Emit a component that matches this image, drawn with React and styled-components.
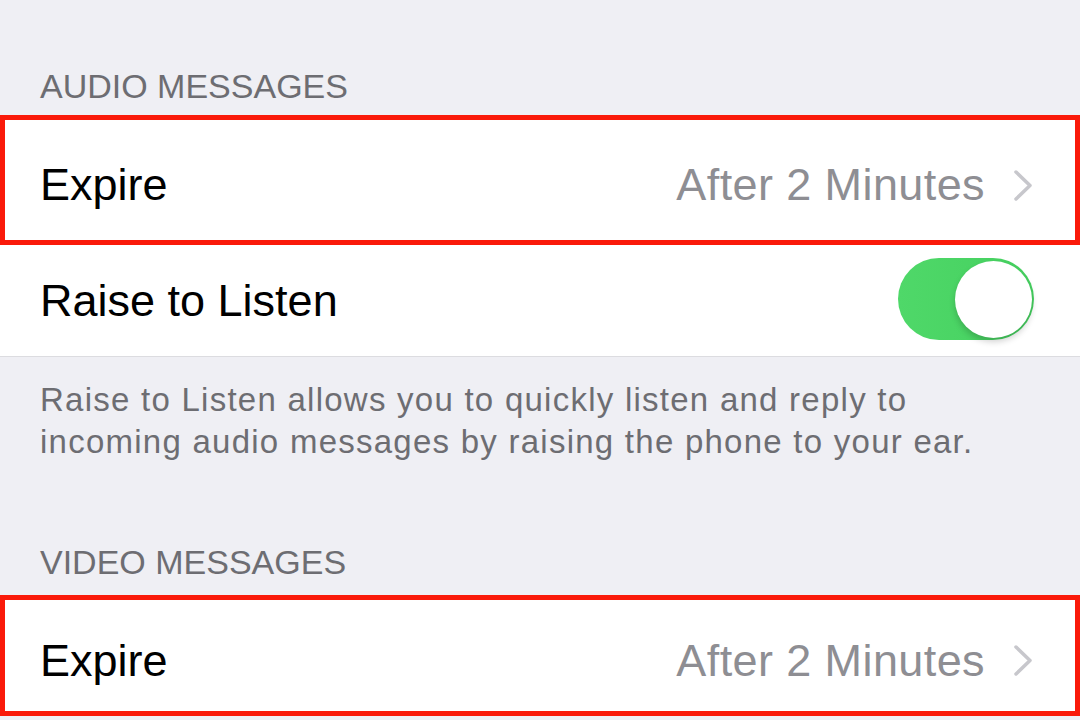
import * as React from 'react';
import styled, { createGlobalStyle } from 'styled-components';

const GlobalStyle = createGlobalStyle`
  html, body {
    margin: 0;
    padding: 0;
    background: #efeff4;
  }
  body {
    font-family: "Liberation Sans", Arial, sans-serif;
    -webkit-font-smoothing: antialiased;
  }
`;

const Page = styled.div`
  width: 1080px;
  height: 720px;
  overflow: hidden;
  background: #efeff4;
`;

const SectionHeader = styled.div`
  padding: 0 40px;
  margin-top: ${p => p.top}px;
  margin-bottom: ${p => p.bottom}px;
  font-size: 34px;
  line-height: 34px;
  color: #6d6d72;
  text-transform: uppercase;
`;

const Cell = styled.div`
  display: flex;
  align-items: center;
  box-sizing: border-box;
  height: ${p => p.height}px;
  padding: ${p => p.offset || 0}px 47px 0 40px;
  background: #ffffff;
  border-bottom: ${p => (p.separator ? '1px solid #dcdce0' : 'none')};
  box-shadow: ${p => (p.highlighted ? 'inset 0 0 0 5px #fa1a0a' : 'none')};
`;

const Label = styled.span`
  flex: 1;
  font-size: 45px;
  color: #000000;
`;

const Value = styled.span`
  font-size: 45px;
  letter-spacing: 0.4px;
  color: #8e8e93;
  margin-right: 28px;
`;

const Track = styled.div`
  display: flex;
  justify-content: flex-end;
  align-items: center;
  box-sizing: border-box;
  width: 136px;
  height: 82px;
  padding: 0 2px;
  margin-right: -1px;
  margin-top: -3px;
  border-radius: 41px;
  background: linear-gradient(90deg, #4fd869 0%, #45d05f 100%);
`;

const Knob = styled.div`
  width: 77px;
  height: 77px;
  border-radius: 50%;
  background: #ffffff;
  box-shadow: 0 4px 6px rgba(0, 0, 0, 0.18);
`;

const Footer = styled.div`
  padding: 22px 40px 0;
  font-size: 33px;
  line-height: 42px;
  letter-spacing: 1.25px;
  color: #6d6d72;
`;

const Chevron = () => (
  <svg width="20" height="33" viewBox="0 0 20 33">
    <polyline
      points="3,3 17,16.5 3,30"
      fill="none"
      stroke="#c7c7cc"
      strokeWidth="3.5"
      strokeLinecap="round"
      strokeLinejoin="round"
    />
  </svg>
);

const Toggle = () => (
  <Track>
    <Knob />
  </Track>
);

export default function App() {
  return (
    <Page>
      <GlobalStyle />
      <SectionHeader top={69} bottom={12}>Audio Messages</SectionHeader>
      <Cell height={130} offset={10} highlighted>
        <Label>Expire</Label>
        <Value>After 2 Minutes</Value>
        <Chevron />
      </Cell>
      <Cell height={112} separator>
        <Label>Raise to Listen</Label>
        <Toggle />
      </Cell>
      <Footer>
        Raise to Listen allows you to quickly listen and reply to incoming audio messages by raising the phone to your ear.
      </Footer>
      <SectionHeader top={82} bottom={16}>Video Messages</SectionHeader>
      <Cell height={121} offset={10} highlighted>
        <Label>Expire</Label>
        <Value>After 2 Minutes</Value>
        <Chevron />
      </Cell>
    </Page>
  );
}
